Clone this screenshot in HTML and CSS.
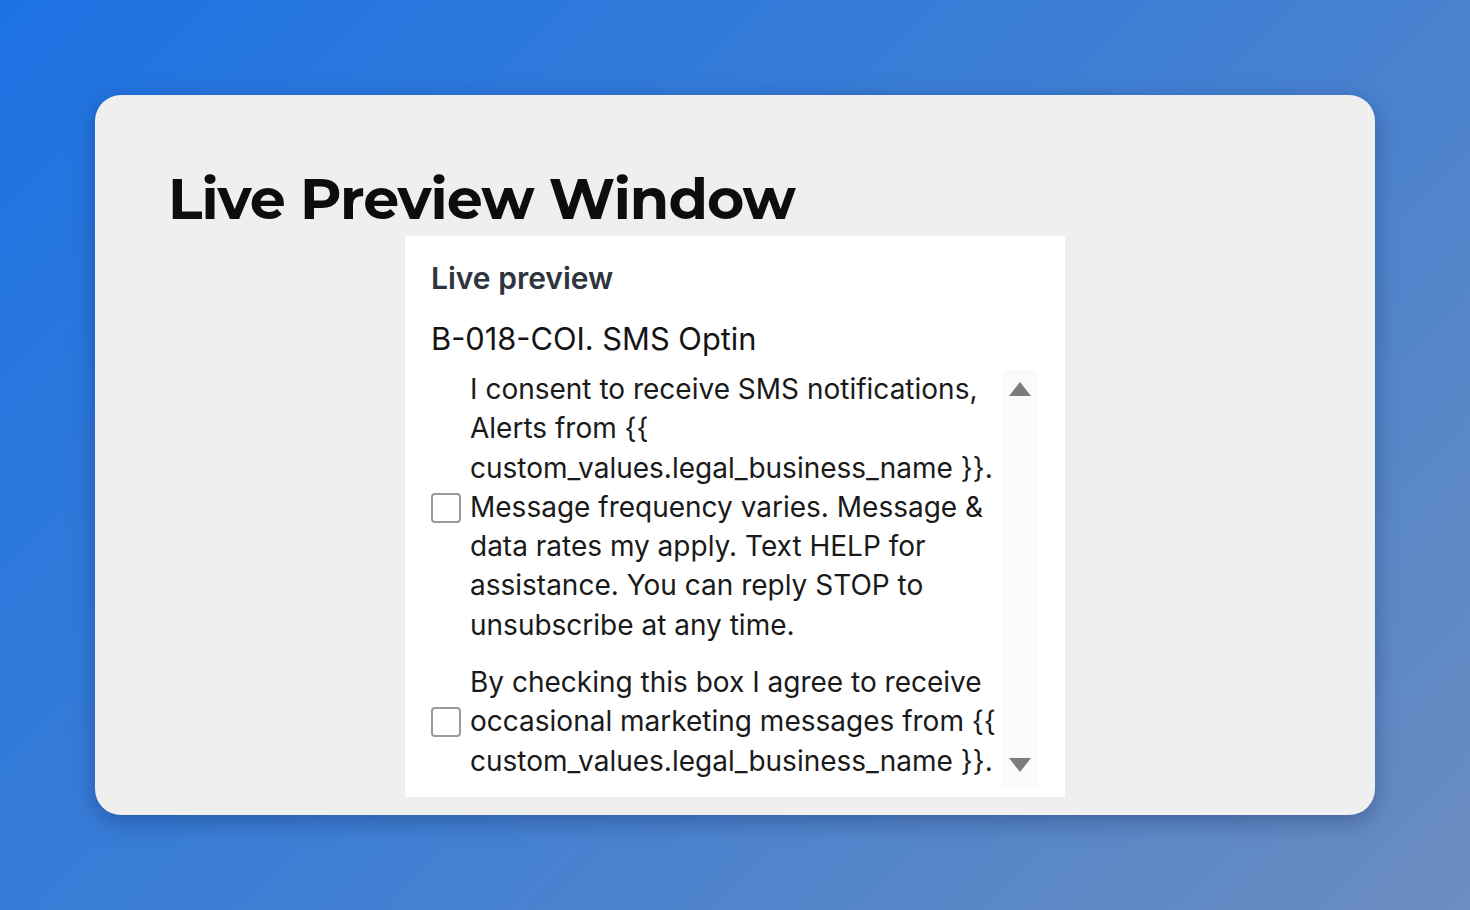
FILE: index.html
```html
<!DOCTYPE html>
<html>
<head>
<meta charset="utf-8">
<link rel="stylesheet" href="styles.css">
</head>
<body>
<div class="card">
  <h1 class="title">Live Preview Window</h1>
  <div class="panel">
    <div class="panel-head">Live preview</div>
    <div class="form-name">B-018-COI. SMS Optin</div>
    <div class="scroller">
      <div class="scroll-content">
        <div class="opt">
          <span class="box"></span>
          <p class="opt-text">I consent to receive SMS notifications, Alerts from {{ custom_values.legal_business_name }}. Message frequency varies. Message &amp; data rates my apply. Text HELP for assistance. You can reply STOP to unsubscribe at any time.</p>
        </div>
        <div class="opt">
          <span class="box"></span>
          <p class="opt-text">By checking this box I agree to receive occasional marketing messages from {{ custom_values.legal_business_name }}.</p>
        </div>
      </div>
      <div class="scrollbar">
        <span class="arrow up"></span>
        <span class="arrow down"></span>
      </div>
    </div>
  </div>
</div>
</body>
</html>
```
FILE: styles.css
```css
html, body {
  margin: 0;
  height: 100%;
}
body {
  background: linear-gradient(135deg, #1d72e3 0%, #3f7fd4 50%, #6c8dbf 100%);
  font-family: Inter, "Noto Sans", sans-serif;
  padding: 95px;
  box-sizing: border-box;
  overflow: hidden;
}
.card {
  background: #efefef;
  border-radius: 26px;
  height: 720px;
  box-sizing: border-box;
  padding: 67px 0 0 73px;
  box-shadow: 0 6px 22px rgba(10, 30, 80, 0.35);
}
.title {
  margin: 0;
  font-family: "Montserrat", Inter, sans-serif;
  font-weight: 700;
  font-size: 57px;
  line-height: 74px;
  letter-spacing: -1px;
  color: #0d0d0d;
}
.panel {
  margin-left: 237px;
  width: 660px;
  height: 561px;
  background: #ffffff;
  box-sizing: border-box;
  padding: 21px 26px 0 26px;
}
.panel-head {
  font-size: 30px;
  font-weight: 600;
  color: #2e3440;
  line-height: 42px;
}
.form-name {
  margin-top: 20px;
  font-size: 30.8px;
  color: #141414;
  line-height: 40px;
}
.scroller {
  margin-top: 11px;
  display: flex;
  height: 417px;
  overflow: hidden;
}
.scroll-content {
  width: 572px;
  overflow: hidden;
}
.opt {
  display: flex;
  align-items: center;
  gap: 9px;
  margin-bottom: 18px;
}
.box {
  flex: none;
  width: 26px;
  height: 26px;
  border: 2px solid #9a9a9a;
  border-radius: 4px;
  background: #fff;
}
.opt-text {
  margin: 0;
  width: 535px;
  font-size: 28px;
  line-height: 39.3px;
  color: #1a1a1a;
}
.scrollbar {
  width: 34px;
  background: #fafafa;
  display: flex;
  flex-direction: column;
  justify-content: space-between;
  align-items: center;
  padding: 12px 0 15px;
  box-sizing: border-box;
}
.arrow {
  width: 0;
  height: 0;
  border-left: 11px solid transparent;
  border-right: 11px solid transparent;
}
.arrow.up {
  border-bottom: 14px solid #7b7b7b;
}
.arrow.down {
  border-top: 14px solid #7b7b7b;
}
```
